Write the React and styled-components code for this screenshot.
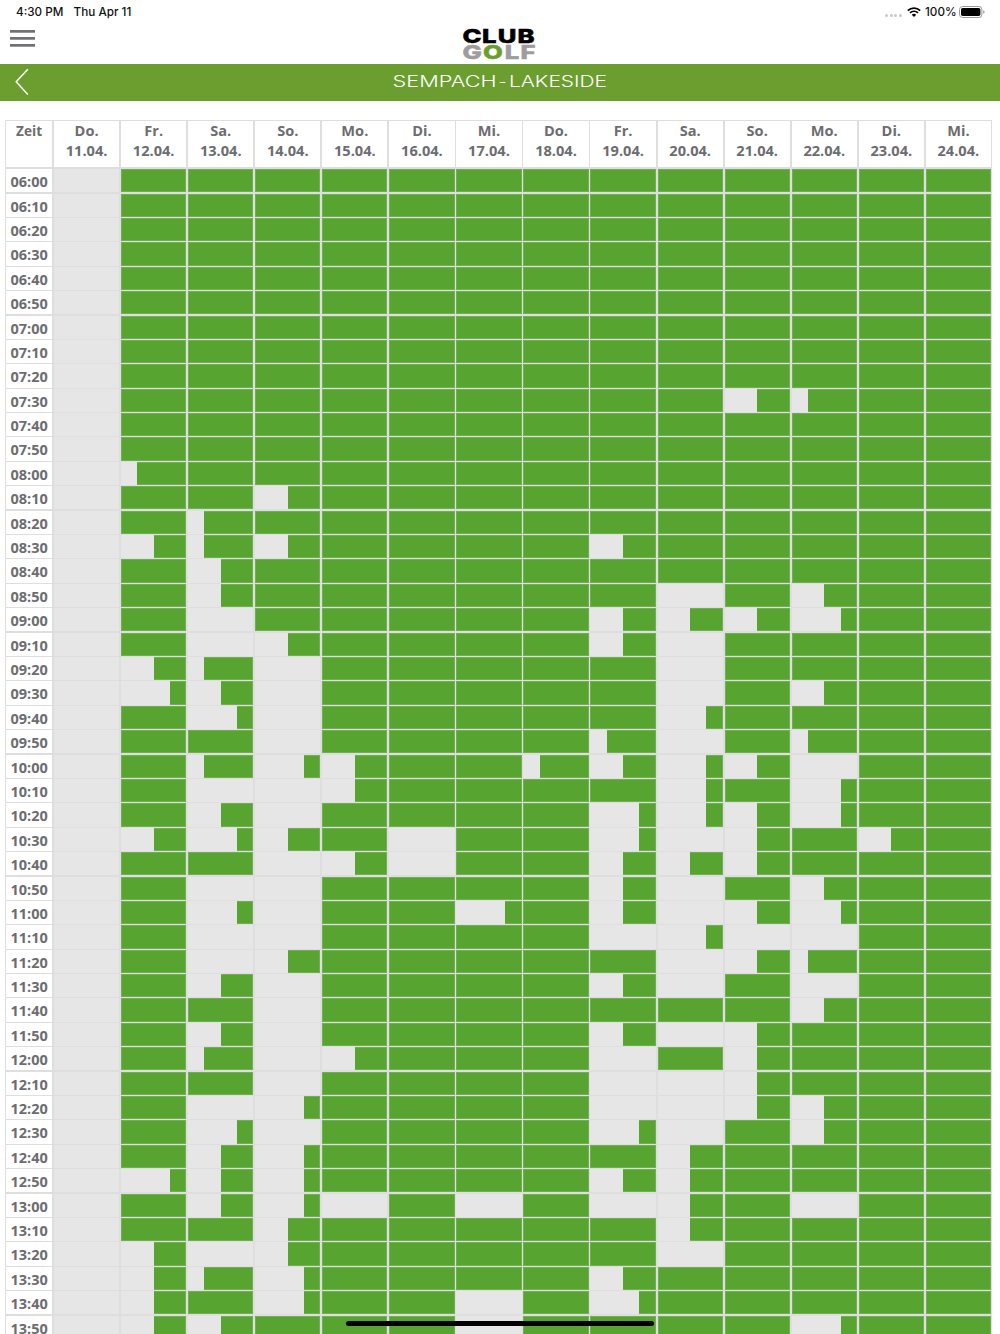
import React from 'react';
import styled, { createGlobalStyle } from 'styled-components';

const theme = {
  bar: '#6b9e2f',
  free: '#57a530',
  busy: '#e6e6e6',
  line: '#dddedd',
  text: '#6c6d70'
};

const GlobalStyle = createGlobalStyle`
  * {
    box-sizing: border-box;
  }
  body {
    margin: 0;
    background: #fff;
    overflow: hidden;
  }
`;

const Screen = styled.div`
  position: relative;
  display: flex;
  flex-direction: column;
  width: 1000px;
  height: 1334px;
  overflow: hidden;
  background: #fff;
  font-family: 'Open Sans', 'Noto Sans', sans-serif;
`;

const StatusBar = styled.div`
  display: flex;
  align-items: center;
  flex: none;
  height: 24px;
  padding: 0 15px 0 16px;
  font-family: Inter, 'Liberation Sans', sans-serif;
  font-size: 11.7px;
  font-weight: 500;
  color: #111;
`;

const StatusText = styled.span`
  display: block;
  width: ${(props) => props.width}px;
  margin-right: ${(props) => props.gap || 0}px;
  white-space: nowrap;
`;

const StatusIcons = styled.div`
  display: flex;
  align-items: center;
  margin-left: auto;
`;

const Dots = styled.div`
  display: flex;
  gap: 1.6px;
  margin: 6px 5px 0 0;
`;

const Dot = styled.i`
  width: 3px;
  height: 3px;
  border-radius: 50%;
  background: #c8c8c8;
`;

const WifiSvg = styled.svg`
  margin-right: 4px;
`;

const AppHeader = styled.header`
  display: flex;
  flex: none;
  justify-content: space-between;
  height: 40px;
  padding: 0 10px;
`;

const MenuButton = styled.div`
  display: flex;
  flex-direction: column;
  justify-content: space-between;
  width: 25px;
  height: 17px;
  margin-top: 6px;
`;

const MenuLine = styled.i`
  height: 3px;
  background: #717174;
  border-bottom: 1px solid #98989a;
`;

const LogoSvg = styled.svg`
  overflow: visible;
`;

const HeaderSpacer = styled.div`
  width: 25px;
`;

const TitleBar = styled.div`
  display: flex;
  align-items: center;
  flex: none;
  height: 37px;
  padding: 0 14px;
  background: ${theme.bar};
`;

const BackSvg = styled.svg`
  margin-top: -1px;
`;

const Title = styled.div`
  display: flex;
  flex: 1;
  justify-content: center;
  margin-right: 16px;
`;

const Table = styled.div`
  display: flex;
  flex-direction: column;
  flex: none;
  width: 987px;
  margin: 19.4px 0 0 5px;
  padding: 1px 1px 0;
  background: ${theme.line};
`;

const Row = styled.div`
  display: grid;
  grid-template-columns: 46.2px repeat(14, 1fr);
  grid-template-rows: 100%;
  column-gap: 1.8px;
  height: ${(props) => (props.$head ? 47.8 : 24.4)}px;
  padding-bottom: ${(props) => (props.$head ? 1.8 : 1.2)}px;
`;

const HeadCell = styled.div`
  background: #fff;
  color: ${theme.text};
  font-size: ${(props) => (props.$small ? 13.6 : 14.6)}px;
  font-weight: 700;
  line-height: ${(props) => (props.$small ? 20 : 19.6)}px;
  text-align: center;
  white-space: pre-line;
`;

const TimeCell = styled.div`
  background: #fff;
  color: ${theme.text};
  font-size: 14.5px;
  font-weight: 700;
  line-height: 25.4px;
  text-align: center;
`;

const SlotCell = styled.div`
  background: ${theme.free};
  box-shadow: inset 0 0 0 1px rgba(222, 222, 222, 0.2);
`;

const Busy = styled.div`
  width: ${(props) => props.$players * 25}%;
  height: 100%;
  background: ${theme.busy};
`;

const HomeIndicator = styled.div`
  position: absolute;
  left: 346px;
  bottom: 8px;
  width: 308px;
  height: 5px;
  border-radius: 3px;
  background: #000;
`;

const days = [
  'Do.\n11.04.', 'Fr.\n12.04.', 'Sa.\n13.04.', 'So.\n14.04.', 'Mo.\n15.04.',
  'Di.\n16.04.', 'Mi.\n17.04.', 'Do.\n18.04.', 'Fr.\n19.04.', 'Sa.\n20.04.',
  'So.\n21.04.', 'Mo.\n22.04.', 'Di.\n23.04.', 'Mi.\n24.04.'
];

// booked players (0-4) per day, one digit for each column
const bookings = {
  '07:30': '40000000002100',
  '08:00': '41000000000000',
  '08:10': '40020000000000',
  '08:20': '40100000000000',
  '08:30': '42120000200000',
  '08:40': '40200000000000',
  '08:50': '40200000040200',
  '09:00': '40400000222300',
  '09:10': '40420000240000',
  '09:20': '42140000040000',
  '09:30': '43240000040200',
  '09:40': '40340000030000',
  '09:50': '40040000140100',
  '10:00': '40132001232400',
  '10:10': '40442000030300',
  '10:20': '40240000332300',
  '10:30': '42320400342020',
  '10:40': '40042400222000',
  '10:50': '40440000240200',
  '11:00': '40340030242300',
  '11:10': '40440000434400',
  '11:20': '40420000042100',
  '11:30': '40240000240400',
  '11:40': '40040000000200',
  '11:50': '40240000242000',
  '12:00': '40142000402000',
  '12:10': '40040000442000',
  '12:20': '40430000442200',
  '12:30': '40340000340200',
  '12:40': '40230000020000',
  '12:50': '43230000220000',
  '13:00': '40234040420400',
  '13:10': '40020000020000',
  '13:20': '42420000040000',
  '13:30': '42130000200000',
  '13:40': '42030040300000',
  '13:50': '42200040000300'
};

const times = Array.from({ length: 48 }, (_, i) => {
  const hour = String(6 + Math.floor(i / 6)).padStart(2, '0');
  return `${hour}:${i % 6}0`;
});

function Logo() {
  return (
    <LogoSvg width='76' height='40' viewBox='0 0 76 40' fontFamily='Inter, Liberation Sans, sans-serif' fontWeight='800' fontSize='19' strokeWidth='0.5'>
      <g transform='scale(1.35 1)'>
        <text x='0.4 14.9 26.5 41.2' y='18.7' fill='#000' stroke='#000'>CLUB</text>
        <text x='0.4 15.6 31.6 43.4' y='34.8' fill='#9d9d9f' stroke='#9d9d9f'>
          G<tspan fill='#6b9e2f' stroke='#6b9e2f'>O</tspan>LF
        </text>
      </g>
    </LogoSvg>
  );
}

function WifiIcon() {
  return (
    <WifiSvg width='14' height='10' viewBox='0 0 14 10' fill='none' stroke='#000' strokeWidth='1.7'>
      <path d='M0.8 3.6 A8.8 8.8 0 0 1 13.2 3.6' />
      <path d='M3 5.9 A5.7 5.7 0 0 1 11 5.9' />
      <path d='M7 10 L4.8 7.8 A3.1 3.1 0 0 1 9.2 7.8 Z' fill='#000' stroke='none' />
    </WifiSvg>
  );
}

function BatteryIcon() {
  return (
    <svg width='26' height='12' viewBox='0 0 26 12'>
      <rect x='0.5' y='0.5' width='22.4' height='11' rx='3' fill='none' stroke='#999' />
      <rect x='2' y='2' width='19.4' height='8' rx='1.7' fill='#000' />
      <path d='M24.2 4.2 Q25.6 4.6 25.6 6 Q25.6 7.4 24.2 7.8 Z' fill='#999' />
    </svg>
  );
}

export default function App() {
  return (
    <Screen>
      <GlobalStyle />
      <StatusBar>
        <StatusText width={48} gap={9.6}>4:30 PM</StatusText>
        <StatusText width={60}>Thu Apr 11</StatusText>
        <StatusIcons>
          <Dots>
            <Dot />
            <Dot />
            <Dot />
            <Dot />
          </Dots>
          <WifiIcon />
          <StatusText width={30} gap={4}>100%</StatusText>
          <BatteryIcon />
        </StatusIcons>
      </StatusBar>
      <AppHeader>
        <MenuButton>
          <MenuLine />
          <MenuLine />
          <MenuLine />
        </MenuButton>
        <Logo />
        <HeaderSpacer />
      </AppHeader>
      <TitleBar>
        <BackSvg width='16' height='28' viewBox='0 0 16 28' fill='none' stroke='#fff' strokeWidth='1.5'>
          <path d='M13.8 1.2 L2.2 13.7 L13.8 26.4' />
        </BackSvg>
        <Title>
          <svg width='216' height='20' viewBox='0 0 216 20' fontFamily='Inter, Liberation Sans, sans-serif' fontWeight='300' fontSize='15.2' fill='#fff'>
            <text x='0.6' y='13.8' textLength='104' lengthAdjust='spacingAndGlyphs'>SEMPACH</text>
            <text x='106.5' y='13.8' textLength='8' lengthAdjust='spacingAndGlyphs'>-</text>
            <text x='117' y='13.8' textLength='98' lengthAdjust='spacingAndGlyphs'>LAKESIDE</text>
          </svg>
        </Title>
      </TitleBar>
      <Table>
        <Row $head>
          <HeadCell $small>Zeit</HeadCell>
          {days.map((day) => (
            <HeadCell key={day}>{day}</HeadCell>
          ))}
        </Row>
        {times.map((time) => (
          <Row key={time}>
            <TimeCell>{time}</TimeCell>
            {(bookings[time] || '40000000000000').split('').map((players, i) => (
              <SlotCell key={i}>
                <Busy $players={players} />
              </SlotCell>
            ))}
          </Row>
        ))}
      </Table>
      <HomeIndicator />
    </Screen>
  );
}
